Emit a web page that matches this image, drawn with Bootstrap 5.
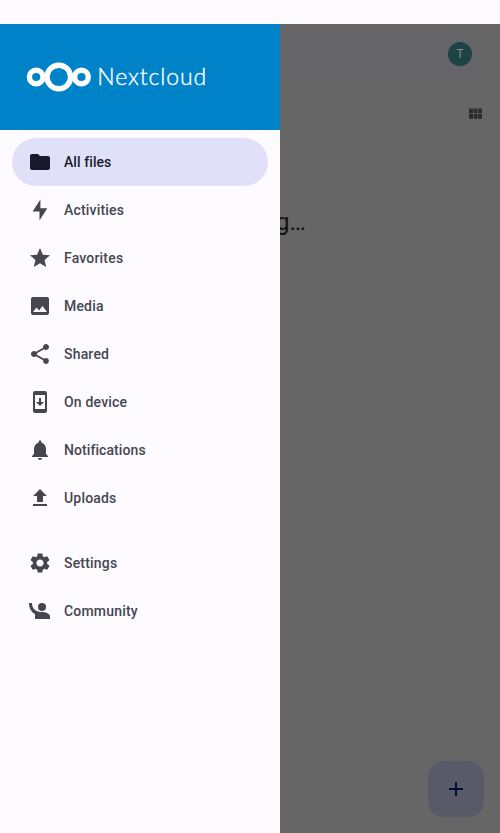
<!DOCTYPE html>
<html lang="en">
<head>
<meta charset="utf-8">
<meta name="viewport" content="width=device-width, initial-scale=1">
<title>Nextcloud</title>
<link href="https://cdn.jsdelivr.net/npm/bootstrap@5.3.0/dist/css/bootstrap.min.css" rel="stylesheet">
<style>
body{font-family:Roboto,sans-serif;background:#fdfbff;height:833px;overflow:hidden}
.status-strip{height:24px}
.app-area{height:809px;background:#666}
.drawer{width:280px;background:#fdfbff;position:relative;z-index:2}
.brand{height:106px;background:#0082c9}
.brand svg{display:block}
.menu{padding:8px 12px}
.menu .nav-link{height:48px;padding:0 16px;gap:12px;border-radius:24px;color:#45464f;font-size:14px;font-weight:500;letter-spacing:.19px}
.menu .nav-link.active{background:#e0e0f9;color:#181a2c}
.menu .nav-link.tight{letter-spacing:.08px}
.menu svg{width:24px;height:24px;fill:currentColor;flex:none}
.menu .group-gap{margin-top:17px}
.content-pane{min-width:0}
.search-pill{height:50px;margin:8px 16px 0 0;border-radius:0 25px 25px 0;background:#656569;padding-right:12px;padding-bottom:6px}
.avatar{width:24px;height:24px;background:#1e4345;color:#7c8b8c;font-size:12px}
.view-toggle{height:20px;margin:22px 16px 0 0}
.loading{width:110px;margin:82px 0 0 -84px;font-size:24.500px;line-height:32px;color:#111;text-align:right;white-space:nowrap}
.fab{width:56px;height:56px;border-radius:16px;background:#585a68;margin:0 16px 16px 0;padding:0;border:0}
</style>
<script src="https://cdn.jsdelivr.net/npm/bootstrap@5.3.0/dist/js/bootstrap.bundle.min.js"></script>
</head>
<body>
<div class="status-strip"></div>
<div class="app-area d-flex">
  <aside class="drawer flex-shrink-0">
    <div class="brand">
      <svg width="280" height="106" viewBox="0 24 280 106" role="img" aria-label="Nextcloud">
        <g fill="none" stroke="#fff" stroke-width="5.400"><circle cx="36.2" cy="77" r="6.800"/><circle cx="58.8" cy="77" r="11.800"/><circle cx="81.5" cy="77" r="6.800"/></g>
        <text x="97.3" y="85" fill="#fff" stroke="#fff" stroke-width=".35" font-family="Lato,sans-serif" font-weight="300" font-size="23" textLength="109" lengthAdjust="spacing">Nextcloud</text>
      </svg>
    </div>
    <nav class="menu nav flex-column">
      <a class="nav-link tight active d-flex align-items-center" href="#"><svg viewBox="0 0 24 24"><path d="M10 4H4c-1.100 0-2 .9-2 2v12c0 1.100.9 2 2 2h16c1.100 0 2-.9 2-2V8c0-1.100-.9-2-2-2h-8l-2-2z"/></svg>All files</a>
      <a class="nav-link d-flex align-items-center" href="#"><svg viewBox="0 0 24 24"><path d="M12.400 1.500 4.600 13.500H11.500V22.500L19.300 10.200H12.400z"/></svg>Activities</a>
      <a class="nav-link d-flex align-items-center" href="#"><svg viewBox="0 0 24 24"><path d="M12 17.270 18.180 21l-1.640-7.030L22 9.240l-7.190-.61L12 2 9.190 8.630 2 9.240l5.460 4.730L5.820 21z"/></svg>Favorites</a>
      <a class="nav-link d-flex align-items-center" href="#"><svg viewBox="0 0 24 24"><path fill-rule="evenodd" d="M21 19V5c0-1.100-.9-2-2-2H5c-1.100 0-2 .9-2 2v14c0 1.100.9 2 2 2h14c1.100 0 2-.9 2-2zM5 18l3.500-4.500 2.500 3.010L14.500 12l4.500 6H5z"/></svg>Media</a>
      <a class="nav-link d-flex align-items-center" href="#"><svg viewBox="0 0 24 24"><path d="M18 16.080c-.76 0-1.440.3-1.960.77L8.910 12.700c.05-.23.09-.46.09-.7s-.04-.47-.09-.7l7.050-4.110c.54.5 1.250.81 2.040.81 1.660 0 3-1.340 3-3s-1.340-3-3-3-3 1.340-3 3c0 .24.04.47.09.7L8.040 9.810C7.500 9.310 6.790 9 6 9c-1.660 0-3 1.340-3 3s1.340 3 3 3c.79 0 1.500-.31 2.040-.81l7.120 4.160c-.05.21-.08.43-.08.65 0 1.610 1.310 2.920 2.920 2.920s2.920-1.310 2.920-2.920-1.310-2.920-2.920-2.920z"/></svg>Shared</a>
      <a class="nav-link d-flex align-items-center" href="#"><svg viewBox="0 0 24 24"><path fill-rule="evenodd" d="M17 1H7c-1.100 0-2 .9-2 2v18c0 1.100.9 2 2 2h10c1.100 0 2-.9 2-2V3c0-1.100-.9-2-2-2zm0 18H7V5h10v14zM16 12h-3V8h-2v4H8l4 4 4-4z"/></svg>On device</a>
      <a class="nav-link tight d-flex align-items-center" href="#"><svg viewBox="0 0 24 24"><path d="M12 22c1.100 0 2-.9 2-2h-4c0 1.100.89 2 2 2zm6-6v-5c0-3.070-1.640-5.640-4.500-6.320V4c0-.83-.67-1.500-1.500-1.500s-1.500.67-1.500 1.500v.68C7.630 5.360 6 7.920 6 11v5l-2 2v1h16v-1l-2-2z"/></svg>Notifications</a>
      <a class="nav-link d-flex align-items-center" href="#"><svg viewBox="0 0 24 24"><path d="M9 16h6v-6h4l-7-7-7 7h4zM5 18h14v2H5z"/></svg>Uploads</a>
      <a class="nav-link group-gap d-flex align-items-center" href="#"><svg viewBox="0 0 24 24"><path d="M19.140 12.940c.04-.3.060-.61.060-.94 0-.32-.02-.64-.07-.94l2.030-1.580c.18-.14.23-.41.12-.61l-1.920-3.320c-.12-.22-.37-.29-.59-.22l-2.390.96c-.5-.38-1.030-.7-1.620-.94l-.36-2.540c-.04-.24-.24-.41-.48-.41h-3.840c-.24 0-.43.17-.47.41l-.36 2.540c-.59.24-1.130.57-1.620.94l-2.390-.96c-.22-.08-.47 0-.59.22L2.740 8.870c-.12.21-.08.47.12.61l2.030 1.580c-.05.3-.09.63-.09.94s.02.64.07.94l-2.030 1.580c-.18.14-.23.41-.12.61l1.920 3.320c.12.22.37.29.59.22l2.390-.96c.5.38 1.030.7 1.620.94l.36 2.540c.05.24.24.41.48.41h3.840c.24 0 .44-.17.47-.41l.36-2.540c.59-.24 1.130-.56 1.620-.94l2.390.96c.22.08.47 0 .59-.22l1.920-3.320c.12-.22.07-.47-.12-.61l-2.010-1.580zM12 15.600c-1.980 0-3.600-1.620-3.600-3.600s1.620-3.600 3.600-3.600 3.600 1.620 3.600 3.600-1.620 3.600-3.600 3.600z"/></svg>Settings</a>
      <a class="nav-link d-flex align-items-center" href="#"><svg viewBox="0 0 24 24"><circle cx="14" cy="8" r="4"/><path d="M1 4h3c0 5.200 3.600 9 9 9h1c4.800 0 8 2.200 8 4.500V20H7v-4.900C3.300 13.300 1 8.900 1 4z"/></svg>Community</a>
    </nav>
  </aside>
  <main class="content-pane flex-grow-1 d-flex flex-column">
    <div class="search-pill d-flex align-items-center justify-content-end"><span class="avatar rounded-circle d-flex align-items-center justify-content-center">T</span></div>
    <div class="view-toggle d-flex justify-content-end"><svg width="18" height="20" viewBox="466 104 18 20" fill="#2b2b2c"><path d="M469 108.500h4v4.700h-4zM473.700 108.500h3.800v4.700h-3.800zM478.200 108.500h3.800v4.700h-3.800zM469 114h4v4.700h-4zM473.700 114h3.800v4.700h-3.800zM478.200 114h3.800v4.700h-3.800z"/></svg></div>
    <div class="loading">Loading…</div>
    <button class="fab btn mt-auto ms-auto d-flex align-items-center justify-content-center" aria-label="Add"><svg width="24" height="24" viewBox="0 0 24 24" fill="#000f36"><path d="M11 5h2v6h6v2h-6v6h-2v-6H5v-2h6z"/></svg></button>
  </main>
</div>
</body>
</html>
